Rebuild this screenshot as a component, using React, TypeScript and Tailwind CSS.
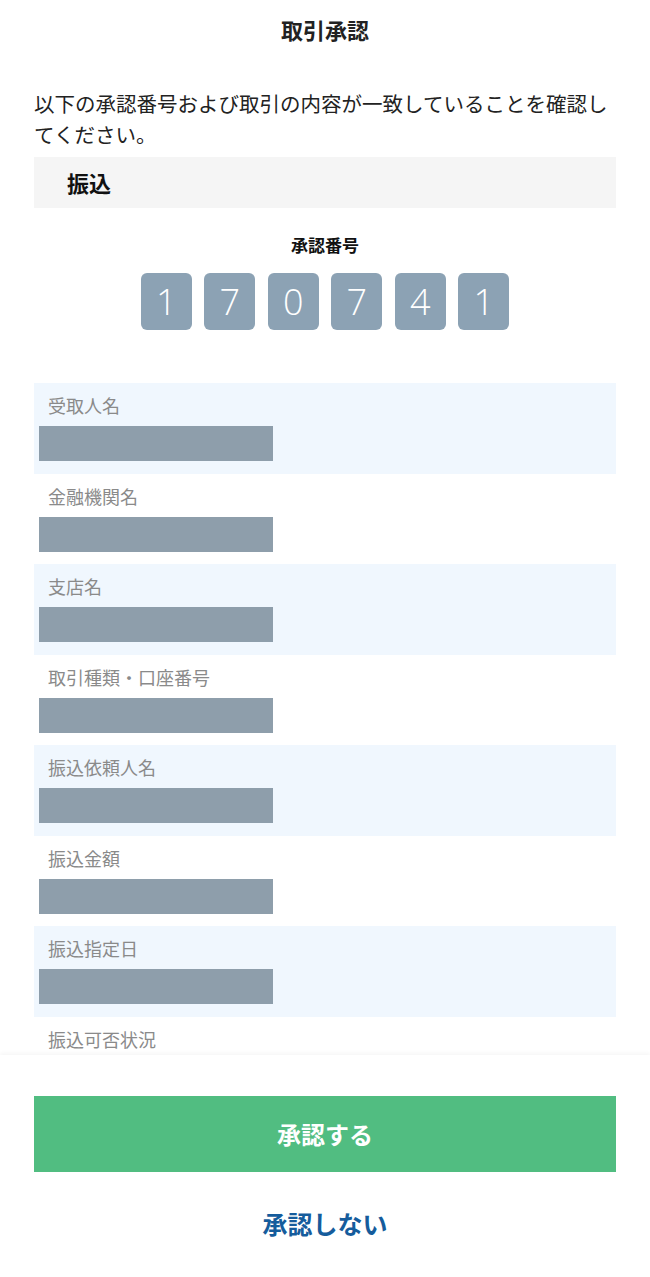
const font = '"Noto Sans CJK JP", "Noto Sans", sans-serif';

const digits = ['1', '7', '0', '7', '4', '1'];

const fields = [
  '受取人名',
  '金融機関名',
  '支店名',
  '取引種類・口座番号',
  '振込依頼人名',
  '振込金額',
  '振込指定日',
];

function Field({ label, shaded }: { label: string; shaded: boolean }) {
  return (
    <div className={`h-[90.5px] pt-[10px] ${shaded ? 'bg-[#f0f7fe]' : 'bg-white'}`}>
      <div className="pl-[14px] text-[18px] leading-[24px] text-[#8a8a8a]">{label}</div>
      <div className="ml-[5px] mt-[9px] h-[35px] w-[234px] bg-[#8e9eab]" />
    </div>
  );
}

export default function App() {
  return (
    <div className="relative h-[1277px] w-[650px] overflow-hidden bg-white" style={{ fontFamily: font }}>
      {/* header */}
      <div className="pt-[13px] text-center text-[22px] font-bold leading-[32px] text-[#222]">取引承認</div>

      <div className="px-[34px]">
        <p className="mt-[43px] text-[20.5px] leading-[31px] text-[#222]">
          以下の承認番号および取引の内容が一致していることを確認してください。
        </p>

        <div className="mt-[7px] flex h-[51px] items-center bg-[#f5f5f5] pl-[33px] text-[22px] font-bold text-[#111]">
          振込
        </div>

        {/* approval number */}
        <div className="mt-[26px] text-center text-[17px] font-bold leading-[22px] text-[#111]">承認番号</div>
        <div className="mt-[17px] flex justify-center gap-[12.5px]">
          {digits.map((d, i) => (
            <div
              key={i}
              className="flex h-[57px] w-[51px] items-center justify-center rounded-[6px] bg-[#8ca2b4] text-[36px] font-light text-white"
              style={{ fontFamily: '"Open Sans", "Liberation Sans", sans-serif' }}
            >
              {d}
            </div>
          ))}
        </div>

        {/* details */}
        <div className="mt-[53px]">
          {fields.map((f, i) => (
            <Field key={f} label={f} shaded={i % 2 === 0} />
          ))}
          <div className="pt-[10px]">
            <div className="pl-[14px] text-[18px] leading-[24px] text-[#8a8a8a]">振込可否状況</div>
          </div>
        </div>
      </div>

      {/* footer */}
      <div className="absolute bottom-0 left-0 right-0 h-[222px] bg-white px-[34px] pt-[41px] shadow-[0_-2px_4px_rgba(0,0,0,0.04)]">
        <button className="flex h-[76px] w-full items-center justify-center bg-[#51bd81] text-[24px] font-bold text-white">
          承認する
        </button>
        <div className="mt-[33px] text-center text-[25px] font-bold leading-[36px] text-[#155c9c]">承認しない</div>
      </div>
    </div>
  );
}
